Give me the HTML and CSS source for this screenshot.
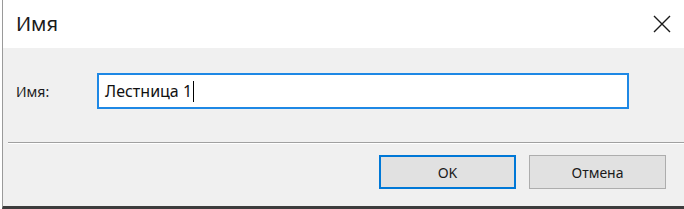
FILE: index.html
```html
<!DOCTYPE html>
<html lang="ru">
<head>
    <meta charset="UTF-8">
    <title>Имя</title>
    <link rel="stylesheet" href="styles.css">
</head>
<body>
    <div class="dialog">
        <div class="titlebar">
            <span class="title">Имя</span>
            <button class="close" title="Закрыть">
                <svg width="18" height="18" viewBox="0 0 18 18">
                    <path d="M1 1 L17 17 M17 1 L1 17" stroke="#1a1a1a" stroke-width="1.4" fill="none"/>
                </svg>
            </button>
        </div>

        <div class="content">
            <div class="field">
                <label class="label" for="name">Имя:</label>
                <div class="input-box">
                    <span class="input-text" id="name">Лестница 1</span><span class="caret"></span>
                </div>
            </div>
        </div>

        <div class="separator"></div>

        <div class="footer">
            <button class="btn btn-default">OK</button>
            <button class="btn">Отмена</button>
        </div>
    </div>
</body>
</html>
```

FILE: styles.css
```css
body {
    margin: 0;
    background: #fff;
    font-family: "Noto Sans", "Open Sans", sans-serif;
    color: #1a1a1a;
}

.dialog {
    width: 681px;
    height: 206px;
    margin-left: 2px;
    border-left: 1px solid #9a9a9a;
    border-bottom: 3px solid #3c3c3c;
    background: #f0f0f0;
    display: flex;
    flex-direction: column;
}

.titlebar {
    height: 48px;
    background: #fff;
    display: flex;
    align-items: center;
    justify-content: space-between;
    padding-left: 13px;
}

.title {
    font-size: 20px;
    color: #1a1a1a;
    margin-top: -2px;
}

.close {
    width: 44px;
    height: 40px;
    border: none;
    background: transparent;
    display: flex;
    align-items: center;
    justify-content: center;
    padding: 0;
}

.content {
    height: 94px;
    box-sizing: border-box;
    padding-top: 25px;
}

.field {
    display: flex;
    align-items: center;
    padding-left: 13px;
}

.label {
    width: 81px;
    font-size: 14px;
    color: #1a1a1a;
}

.input-box {
    width: 522px;
    height: 32px;
    background: #fff;
    border: 2px solid #1e88e5;
    display: flex;
    align-items: center;
    padding-left: 6px;
}

.input-text {
    font-size: 16px;
    color: #111;
}

.caret {
    display: inline-block;
    width: 1px;
    height: 21px;
    background: #000;
    margin-left: 1px;
}

.separator {
    height: 1px;
    margin-left: 5px;
    background: #a0a0a0;
    border-bottom: 1px solid #fff;
}

.footer {
    flex: 1;
    display: flex;
    justify-content: flex-end;
    align-items: flex-start;
    gap: 13px;
    padding-top: 11px;
    padding-right: 18px;
}

.btn {
    width: 137px;
    height: 34px;
    background: #e1e1e1;
    border: 1px solid #adadad;
    font-family: "Noto Sans", "Open Sans", sans-serif;
    font-size: 14px;
    color: #1a1a1a;
    padding: 0;
}

.btn-default {
    border: 2px solid #0078d7;
}
```
